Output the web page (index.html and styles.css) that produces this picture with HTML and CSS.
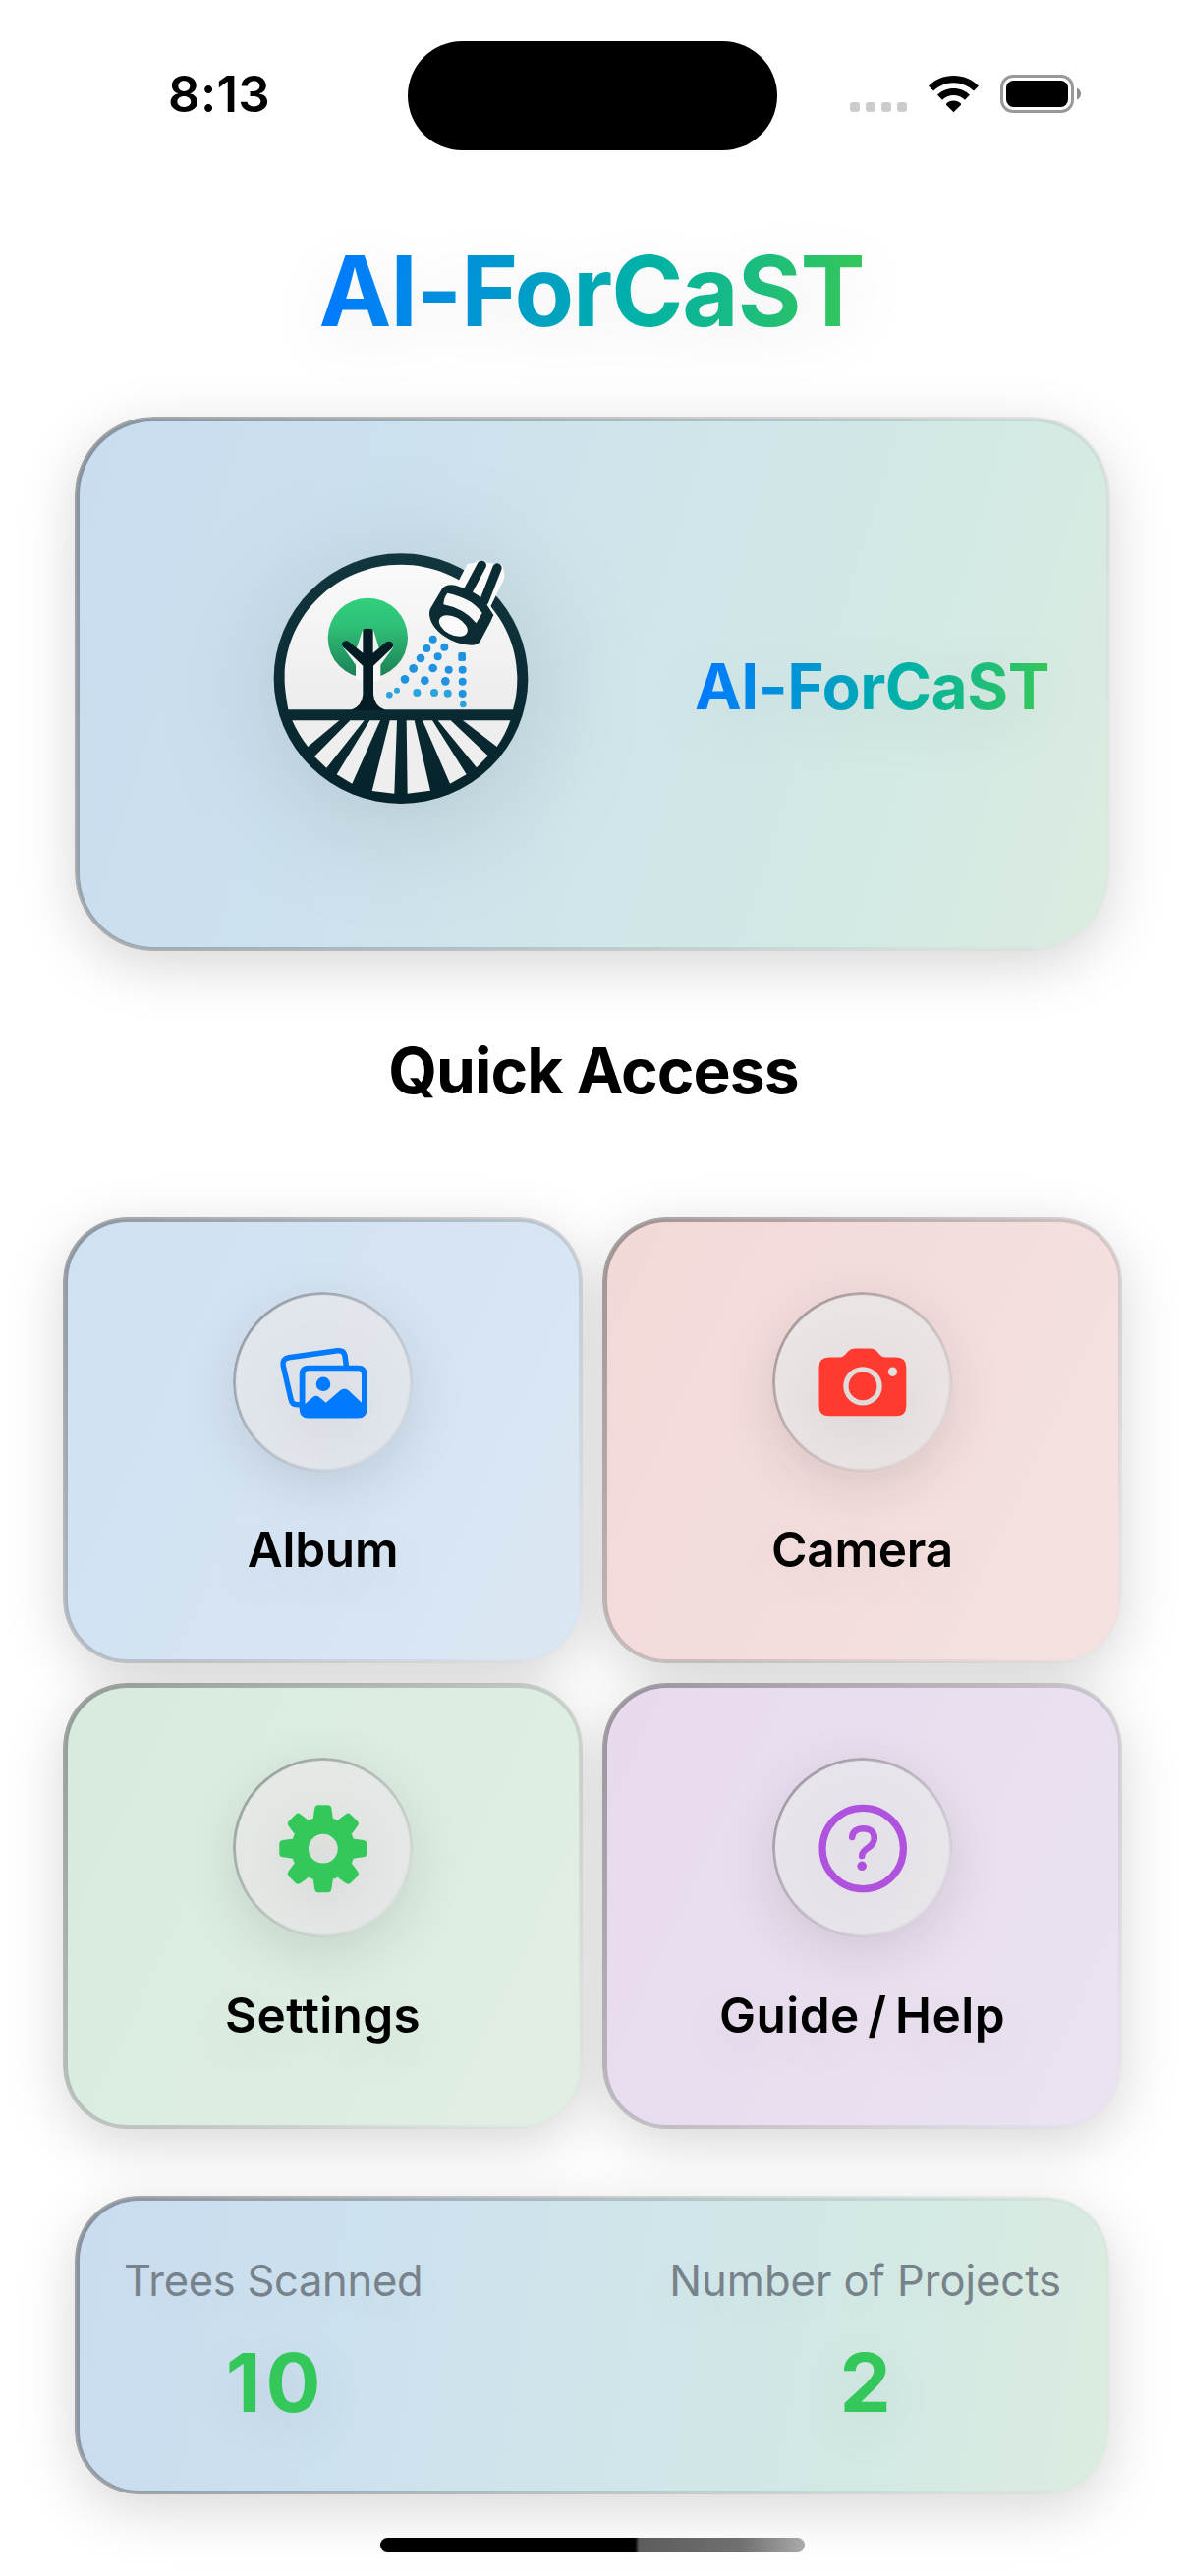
FILE: index.html
```html
<!DOCTYPE html>
<html lang="en">
<head>
<meta charset="utf-8">
<title>AI-ForCaST</title>
<link rel="stylesheet" href="styles.css">
</head>
<body>
<header class="status">
  <div class="status-time">8:13</div>
  <div class="island"></div>
  <div class="status-icons">
    <div class="signal"><i></i><i></i><i></i><i></i></div>
    <svg class="wifi" viewBox="0 0 51 38">
      <path d="M25.5 0C35.600 0 44.500 4 51 10.500L46 15.600C40.500 10.300 33.500 7.200 25.500 7.200S10.500 10.300 5 15.600L0 10.500C6.500 4 15.400 0 25.500 0Z"/>
      <path d="M25.500 13C32 13 37.700 15.500 42 19.600L37 24.700C34 21.800 30 20 25.500 20S17 21.800 14 24.700L9 19.600C13.300 15.500 19 13 25.500 13Z"/>
      <path d="M25.500 25.500C28.500 25.500 31 26.700 33 28.700Q33.300 29.300 32.800 29.900L25.500 37.300L18.200 29.900Q17.700 29.300 18 28.700C20 26.700 22.500 25.500 25.500 25.500Z"/>
    </svg>
    <svg class="battery" viewBox="0 0 82 39">
      <rect x="1.500" y="1.500" width="72" height="36" rx="11.500" fill="none" stroke="#999" stroke-width="3"/>
      <rect x="6" y="6" width="63" height="27" rx="7.500"/>
      <path d="M78 13.500Q82 15.500 82 19.500T78 25.500Z" fill="#8c8c8c"/>
    </svg>
  </div>
</header>

<main>
  <h1 class="title gradient-text">AI-ForCaST</h1>

  <section class="card hero">
    <svg class="logo" viewBox="0 0 960 900">
      <defs>
        <linearGradient id="leaf" x1="0" y1="0" x2="0" y2="1">
          <stop offset="0" stop-color="#2fd07c"/><stop offset=".35" stop-color="#2fc077"/><stop offset="1" stop-color="#1b7f55"/>
        </linearGradient>
        <linearGradient id="ring" x1="0" y1="0" x2="0" y2="1">
          <stop offset="0" stop-color="#12363e"/><stop offset="1" stop-color="#05232b"/>
        </linearGradient>
        <linearGradient id="paper" x1="0" y1="0" x2="0" y2="1">
          <stop offset="0" stop-color="#fafafa"/><stop offset="1" stop-color="#ececec"/>
        </linearGradient>
      </defs>
      <ellipse cx="474" cy="452" rx="388" ry="382" fill="url(#ring)"/>
      <path d="M130 547C122 500 118 470 119 445C122 258 278 104 474 104S828 262 829 445Q830 500 816 547Z" fill="url(#paper)"/>
      <g fill="#eeeeee">
        <path d="M142 580H286L190 660Q160 622 142 580Z"/>
        <path d="M319 580H362L247 725L210 690Z"/>
        <path d="M379 580H411L325 773L278 745Z"/>
        <path d="M440 580H462L454 803L386 795Z"/>
        <path d="M491 580H515L564 794L494 803Z"/>
        <path d="M540 580H570L674 745L624 773Z"/>
        <path d="M587 580H626L740 688L705 724Z"/>
        <path d="M663 580H808Q794 622 767 660Z"/>
      </g>
      <circle cx="373" cy="328" r="122" fill="url(#leaf)"/>
      <path d="M336 454V410L298 358L304 340L338 362L357 303H390L408 362L440 340L450 358L412 410V454L373 470Z" fill="#f5f6f5"/>
      <path d="M336 360Q352 345 357 310V376ZM408 360Q394 345 389 310V376Z" fill="#eaf3ee"/>
      <g fill="#041c24">
        <path d="M358 302Q373 296 389 302V374L430 340Q446 334 450 348Q452 354 446 360L390 413V500Q392 536 428 549H320Q356 536 358 500V413L298 356Q290 346 298 340Q310 333 318 342L358 374Z"/>
      </g>
      <path d="M652 150L677 102L700 98Q718 84 736 98L782 104Q794 130 788 150L748 232L757 258L728 300L640 200Z" fill="#fafafa"/>
      <g fill="none" stroke="#0c2c34" stroke-linecap="round">
        <path d="M680 182L721 106M728 216L768 114" stroke-width="28"/>
      </g>
      <path d="M600 178Q612 162 640 167L672 178Q715 195 735 224L757 258Q752 268 748 278L716 338Q708 350 690 350Q645 350 605 322Q560 290 561 250Q562 240 568 232Z" fill="#0c2c34"/>
      <path d="M616 191Q605 205 604 226Q668 238 704 283L722 252Q694 208 616 191Z" fill="#f7f7f7"/>
      <ellipse cx="634" cy="291" rx="47" ry="27" transform="rotate(28 634 291)" fill="#fafafa"/>
      <g fill="#1f92e0">
        <circle cx="572" cy="332" r="12"/><circle cx="607" cy="356" r="12"/><circle cx="553" cy="360" r="12"/>
        <circle cx="534" cy="390" r="13"/><circle cx="587" cy="385" r="12"/><rect x="649" y="372" width="23" height="27" rx="5"/>
        <circle cx="512" cy="421" r="13"/><circle cx="572" cy="420" r="13"/><circle cx="620" cy="425" r="12"/><circle cx="662" cy="425" r="12"/>
        <circle cx="486" cy="454" r="13"/><circle cx="547" cy="458" r="13"/><circle cx="610" cy="460" r="13"/><circle cx="662" cy="461" r="12"/>
        <circle cx="662" cy="498" r="12"/>
      </g>
      <g fill="#2aa4dc">
        <circle cx="462" cy="488" r="9"/><circle cx="439" cy="502" r="10"/><circle cx="523" cy="495" r="12"/><circle cx="576" cy="495" r="12"/><circle cx="617" cy="497" r="12"/><circle cx="664" cy="531" r="10"/>
      </g>
    </svg>
    <div class="hero-name gradient-text">AI-ForCaST</div>
  </section>

  <h2 class="section-title">Quick Access</h2>

  <nav class="tiles">
    <a class="card tile album">
      <span class="disc"><svg viewBox="0 0 180 180" fill="none">
        <path d="M68 112.800H63.500Q58 112.800 57 107L49.200 73Q48 66 55 64.800L104.500 57.800Q110.800 57 112 62.800L113.600 75" stroke="#007aff" stroke-width="5.500"/>
        <path fill-rule="evenodd" fill="#007aff" d="M75 72.800H125.500Q134.500 72.800 134.500 82V117Q134.500 126.500 125.500 126.500H75Q65.700 126.500 65.700 117V82Q65.700 72.800 75 72.800ZM71.500 112L79.500 105Q82.800 102.500 86 105L92.700 110.700L107.500 98Q111.500 95 115.500 98L129 110.700V82.500Q129 78.300 125 78.300H75.500Q71.500 78.300 71.500 82.500Z"/>
        <circle cx="90" cy="91.800" r="7.300" fill="#007aff"/>
      </svg></span>
      <span class="tile-label">Album</span>
    </a>
    <a class="card tile camera">
      <span class="disc"><svg viewBox="0 0 180 180" fill="#ff3b30">
        <path fill-rule="evenodd" d="M56 64.500H66Q69.600 64.500 72 62L75 58.500Q77.800 55.500 82 55.500H97.500Q101.800 55.500 104.500 58.500L107.800 62.300Q109.800 64.500 113 64.500H124Q134.300 64.500 134.300 74.500V114.200Q134.300 124.200 124 124.200H56Q45.500 124.200 45.500 114.200V74.500Q45.500 64.500 56 64.500ZM90 74.200A19.700 19.700 0 1 0 90 113.600A19.700 19.700 0 1 0 90 74.200ZM120.500 74.500A4.700 4.700 0 1 0 120.500 83.900A4.700 4.700 0 1 0 120.500 74.500Z"/>
        <circle cx="90" cy="93.900" r="14.400"/>
      </svg></span>
      <span class="tile-label">Camera</span>
    </a>
    <a class="card tile settings">
      <span class="disc"><svg viewBox="0 0 180 180" fill="#34c759">
        <defs><path id="tooth" d="M-11.500 -28L-10 -31Q-9.600 -35 -8.600 -41Q-8 -44.500 -5 -44.500H5Q8 -44.500 8.600 -41Q9.600 -35 10 -31L11.500 -28Z"/></defs>
        <g transform="translate(89.800 90.700)">
          <circle r="23.700" fill="none" stroke="#34c759" stroke-width="17.600"/>
          <use href="#tooth"/><use href="#tooth" transform="rotate(45)"/><use href="#tooth" transform="rotate(90)"/><use href="#tooth" transform="rotate(135)"/>
          <use href="#tooth" transform="rotate(180)"/><use href="#tooth" transform="rotate(225)"/><use href="#tooth" transform="rotate(270)"/><use href="#tooth" transform="rotate(315)"/>
        </g>
      </svg></span>
      <span class="tile-label">Settings</span>
    </a>
    <a class="card tile help">
      <span class="disc"><svg viewBox="0 0 180 180" fill="none" stroke="#af52de">
        <circle cx="90.200" cy="90.500" r="41.200" stroke-width="7.200"/>
        <path d="M79.200 79C79.800 73.300 84 70.200 90.700 70.200C97.500 70.200 101.800 74 101.800 79.800C101.800 85 99 87.500 95.500 89.800C91.500 92.300 89.300 94.300 89.200 98" stroke-width="6.600" stroke-linecap="round"/>
        <circle cx="89.200" cy="108.300" r="4.800" fill="#af52de" stroke="none"/>
      </svg></span>
      <span class="tile-label">Guide / Help</span>
    </a>
  </nav>

  <section class="card stats">
    <div class="stat">
      <span class="stat-label trees">Trees Scanned</span>
      <span class="stat-value ten">10</span>
    </div>
    <div class="stat">
      <span class="stat-label">Number of Projects</span>
      <span class="stat-value">2</span>
    </div>
  </section>
</main>
<div class="home-indicator"></div>
</body>
</html>
```
FILE: styles.css
```css
* { box-sizing: border-box; }
body {
  margin: 0;
  width: 1206px;
  height: 2622px;
  overflow: hidden;
  background: #fff;
  color: #000;
  font-family: Inter, "Liberation Sans", sans-serif;
  display: flex;
  flex-direction: column;
}
h1, h2 { margin: 0; }
svg { display: block; }

/* status bar */
.status {
  height: 194px;
  padding: 41.5px 106px 0 171px;
  display: grid;
  grid-template-columns: 244px 376px 1fr;
}
.status-time {
  font-size: 51px;
  font-weight: 600;
  line-height: 60px;
  letter-spacing: .3px;
  margin-top: 24.5px;
}
.island { height: 111px; border-radius: 56px; background: #000; }
.status-icons {
  display: flex;
  align-items: flex-start;
  justify-content: flex-end;
  padding-top: 34.5px;
}
.signal { display: flex; gap: 6px; margin: 28px 22px 0 0; }
.signal i { width: 10px; height: 10px; border-radius: 3px; background: #ccc; }
.wifi { width: 51px; height: 38px; margin: 1px 22px 0 0; }
.battery { width: 82px; height: 39px; }

/* text */
.gradient-text {
  background: linear-gradient(100deg, #007aff 3%, #00b1a8 58%, #34c759 97%);
  -webkit-background-clip: text;
  background-clip: text;
  color: transparent;
  font-weight: 700;
  filter: drop-shadow(0 15px 30px rgba(0, 0, 0, .07));
}
.title {
  width: max-content;
  margin: 42px auto 70px;
  padding-right: 2px;
  font-size: 99px;
  line-height: 120px;
  letter-spacing: -1.1px;
}
.section-title {
  margin: 84px 0 111px;
  padding-left: 2px;
  text-align: center;
  font-size: 64px;
  line-height: 80px;
  font-weight: 700;
  letter-spacing: -.9px;
}

/* glass cards */
main { position: relative; z-index: 0; display: flex; flex-direction: column; }
.card { position: relative; border-radius: 63px; background-clip: padding-box; }
.card::before {
  content: "";
  position: absolute;
  inset: 0;
  z-index: -1;
  border-radius: inherit;
  box-shadow: 0 15px 60px rgba(0, 0, 0, .17);
}
.card::after, .disc::after {
  content: "";
  position: absolute;
  inset: -2.25px;
  padding: 4.5px;
  border-radius: 65px;
  background: linear-gradient(var(--angle), rgba(0, 0, 0, .34), rgba(0, 0, 0, .28) 14%, rgba(80, 80, 80, .03) 88%, rgba(128, 128, 128, .02));
  -webkit-mask: linear-gradient(#000 0 0) content-box exclude, linear-gradient(#000 0 0);
  mask: linear-gradient(#000 0 0) content-box exclude, linear-gradient(#000 0 0);
}
.hero {
  --angle: 117.2deg;
  height: 540px;
  margin: 0 78px;
  padding: 114px 0 0 172px;
  border-radius: 78px;
  display: flex;
  align-items: flex-start;
  background: linear-gradient(107deg, #cadcf0, #cce1ee 28%, #d0e6e9 56%, #d3e9e4 78%, #dcece0);
}
.hero::after { border-radius: 80px; }
.logo {
  width: 320px;
  height: 300px;
  filter: drop-shadow(0 15px 60px rgba(0, 0, 0, .13));
}
.hero-name {
  margin: 119px 0 0 137px;
  font-size: 64px;
  line-height: 80px;
  letter-spacing: -.5px;
}

.tiles {
  margin: 0 66px;
  display: grid;
  grid-template-columns: 1fr 1fr;
  grid-auto-rows: 450px;
  gap: 24px;
}
.tile {
  --angle: 130.6deg;
  padding-top: 75.5px;
  display: flex;
  flex-direction: column;
  align-items: center;
  gap: 50.5px;
}
.album { background: linear-gradient(115deg, #d0e1f2, #dbe7f3); }
.camera { background: linear-gradient(115deg, #f2d9d8, #f4e2e1); }
.settings { background: linear-gradient(115deg, #d8ebdf, #e1eee4); }
.help { background: linear-gradient(115deg, #e7daec, #ebe3f1); }
.disc {
  position: relative;
  width: 180px;
  height: 180px;
  border-radius: 50%;
  background: rgba(232, 231, 233, .68);
  box-shadow: 0 15px 60px rgba(0, 0, 0, .11);
}
.disc::after {
  --angle: 135deg;
  inset: -1.5px;
  padding: 3px;
  border-radius: 50%;
}
.disc svg { width: 180px; height: 180px; filter: drop-shadow(0 15px 30px rgba(0, 0, 0, .08)); }
.tile-label {
  font-size: 49.5px;
  font-weight: 600;
  line-height: 60px;
  letter-spacing: -.25px;
  text-shadow: 0 15px 60px rgba(0, 0, 0, .1);
}
.settings .tile-label { letter-spacing: .33px; }
.help .tile-label { letter-spacing: .5px; word-spacing: -4.5px; }

.stats {
  --angle: 105.9deg;
  height: 300px;
  margin: 72px 78px 0;
  padding: 57px 48px 0;
  display: flex;
  justify-content: space-between;
  background: linear-gradient(100deg, #cadcf0, #cce1ee 28%, #d0e6e9 56%, #d3e9e4 78%, #dcece0);
}
.stat {
  display: flex;
  flex-direction: column;
  align-items: center;
  gap: 27px;
  text-shadow: 0 15px 60px rgba(0, 0, 0, .1);
}
.stat-label { font-size: 43.5px; line-height: 54px; color: #78828a; }
.stat-label.trees { letter-spacing: -.3px; }
.stat-value {
  font-size: 83px;
  line-height: 100px;
  font-weight: 700;
  color: #34c759;
}
.stat-value.ten { letter-spacing: 5px; padding-left: 5px; }
.home-indicator {
  width: 432px;
  height: 15px;
  margin: 46px auto 0;
  border-radius: 8px;
  position: relative;
  background: linear-gradient(90deg, #000 60%, #5c5c5c 61%, #707070 85%, #aaa);
}
```
